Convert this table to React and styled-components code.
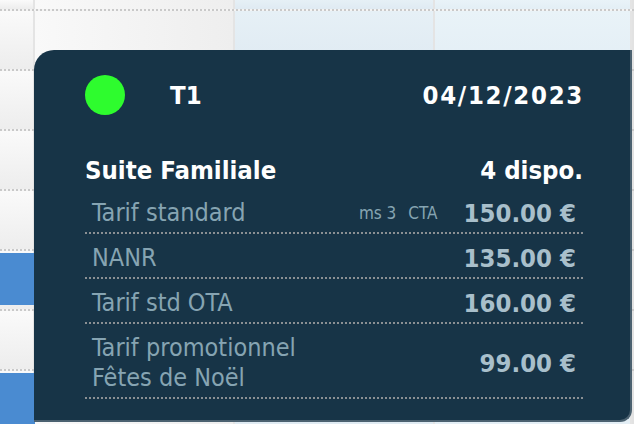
import styled, { createGlobalStyle } from "styled-components";

const GlobalStyle = createGlobalStyle`
    html, body {
        margin: 0;
        padding: 0;
        overflow: hidden;
    }
    body {
        font-family: "DejaVu Sans Condensed", "DejaVu Sans", sans-serif;
    }
`;

const ROWS = [9, 58, 58, 58, 58, 58, 58, 58];
const BLUE_ROWS = [5, 7];

const RATES = [
    { label: ["Tarif standard"], meta: ["ms 3", "CTA"], price: "150.00 €" },
    { label: ["NANR"], price: "135.00 €" },
    { label: ["Tarif std OTA"], price: "160.00 €" },
    { label: ["Tarif promotionnel", "Fêtes de Noël"], price: "99.00 €" },
];

export default function App() {
    return (
        <Page>
            <GlobalStyle />

            <Planning>
                {ROWS.map((h, i) => (
                    <PlanningRow key={i} $height={h}>
                        <RoomCell>
                            {BLUE_ROWS.includes(i) && <Booking />}
                        </RoomCell>
                        <DayCell />
                        <DayCell $weekend />
                        <DayCell $weekend $light />
                        <Edge />
                    </PlanningRow>
                ))}
            </Planning>

            <Tooltip>
                <Header>
                    <Status />
                    <RoomNumber>T1</RoomNumber>
                    <DateLabel>04/12/2023</DateLabel>
                </Header>

                <TitleRow>
                    <span>Suite Familiale</span>
                    <span>4 dispo.</span>
                </TitleRow>

                {RATES.map((r, i) => (
                    <RateRow key={i}>
                        <RateLabel>
                            {r.label.map(l => <div key={l}>{l}</div>)}
                        </RateLabel>
                        {r.meta && (
                            <RateMeta>
                                {r.meta.map(m => <span key={m}>{m}</span>)}
                            </RateMeta>
                        )}
                        <Price>{r.price}</Price>
                    </RateRow>
                ))}
            </Tooltip>
        </Page>
    );
}


/* ------------------- styles ------------------- */
const Page = styled.div`
    position: relative;
    width: 634px;
    height: 424px;
    overflow: hidden;
    background-color: #f4f4f4;
`;

const Planning = styled.div`
    display: flex;
    flex-direction: column;
`;

const PlanningRow = styled.div`
    display: grid;
    grid-template-columns: 35px 200px 200px 197px 2px;
    height: ${p => p.$height}px;
    border-bottom: 2px dotted #c9c9c9;

    & > div {
        border-right: 2px solid #e4e4e4;
    }
`;

const RoomCell = styled.div`
    background: linear-gradient(180deg, #fafafa 0%, #ededed 100%);
    padding: 2px 0 4px;
    box-sizing: border-box;
`;

const Booking = styled.div`
    height: 100%;
    background-color: #4a8bd1;
    margin-right: -2px;
`;

const DayCell = styled.div`
    background: ${p => p.$weekend
        ? (p.$light ? "linear-gradient(180deg, #e9f3f8 0%, #e3eef5 100%)" : "linear-gradient(180deg, #e6f0f6 0%, #dfeaf2 100%)")
        : "linear-gradient(90deg, #f9f9f9 0%, #eeeeee 100%)"};
`;

const Edge = styled.div`
    background-color: #e2e2e2;
    border-right: none !important;
`;

const Tooltip = styled.div`
    position: absolute;
    left: 34px;
    top: 50px;
    width: 598px;
    height: 372px;
    box-sizing: border-box;
    padding: 25px 47px 0 51px;

    background-color: #173447;
    border-right: 2px solid #4b6170;
    border-bottom: 2px solid #4b6170;
    border-radius: 20px 0 12px 0;
`;

const Header = styled.div`
    height: 40px;
    display: flex;
    align-items: center;

    font-size: 25.5px;
    font-weight: bold;
    line-height: 40px;
    color: #ffffff;
`;

const Status = styled.div`
    width: 40px;
    height: 40px;
    border-radius: 50%;
    background-color: #2efc2e;
`;

const RoomNumber = styled.span`
    margin-left: 45px;
`;

const DateLabel = styled.span`
    margin-left: auto;
    letter-spacing: 1.7px;
    margin-right: -1px;
`;

const TitleRow = styled.div`
    margin-top: 40px;
    margin-bottom: 4px;
    display: flex;
    justify-content: space-between;

    font-size: 25.5px;
    font-weight: bold;
    line-height: 30px;
    color: #ffffff;
`;

const RateRow = styled.div`
    display: flex;
    align-items: center;
    padding: 9px 7px 4px;
    border-bottom: 2px dotted #8b9094;
    line-height: 30px;
`;

const RateLabel = styled.div`
    font-size: 25px;
    color: #86a4b2;
`;

const RateMeta = styled.div`
    margin-left: auto;
    margin-right: 26px;
    display: flex;
    gap: 12px;

    font-size: 17px;
    color: #86a4b2;
`;

const Price = styled.span`
    margin-left: auto;
    font-size: 25.5px;
    font-weight: bold;
    color: #a8bfcb;

    ${RateMeta} + & {
        margin-left: 0;
    }
`;
